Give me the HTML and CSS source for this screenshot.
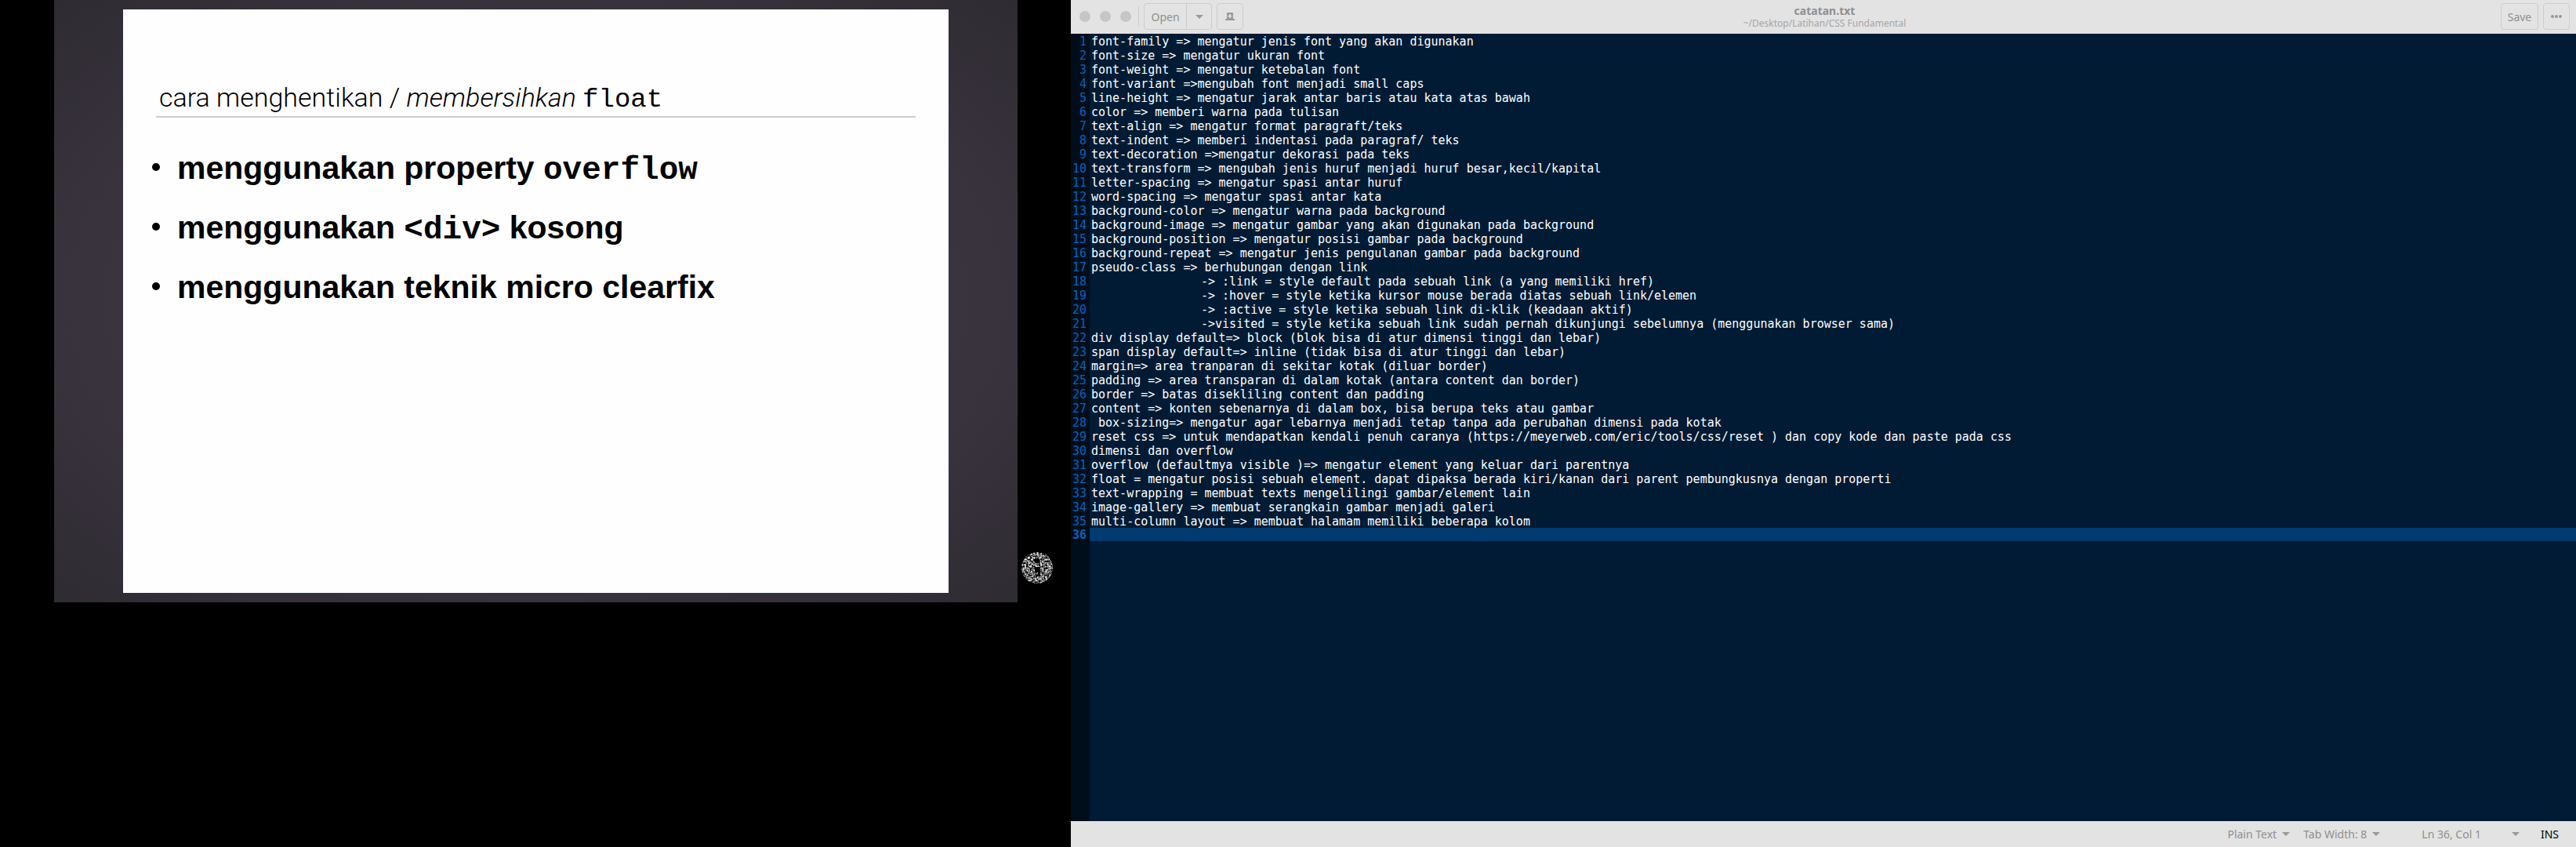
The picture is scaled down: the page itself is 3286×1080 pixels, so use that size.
FILE: index.html
```html
<!DOCTYPE html>
<html lang="id">
<head>
<meta charset="utf-8">
<title>catatan.txt</title>
<link rel="stylesheet" href="styles.css">
</head>
<body>
<main class="desktop">
  <section class="screen">
    <div class="stage">
      <article class="slide">
        <h1 class="slide-title">cara menghentikan / <em>membersihkan</em> <code>float</code></h1>
        <ul class="slide-list">
          <li>menggunakan property <code>overflow</code></li>
          <li>menggunakan <code>&lt;div&gt;</code> kosong</li>
          <li>menggunakan teknik micro clearfix</li>
        </ul>
      </article>
    </div>
    <svg class="watermark" viewBox="0 0 40 40" aria-hidden="true">
      <defs>
        <filter id="grain" x="0" y="0" width="1" height="1" color-interpolation-filters="sRGB">
          <feTurbulence type="fractalNoise" baseFrequency="0.45" numOctaves="2" seed="4"/>
          <feColorMatrix values="2.4 0 0 0 -0.78  2.4 0 0 0 -0.78  2.4 0 0 0 -0.78  0 0 0 0 1"/>
          <feComposite in2="SourceGraphic" operator="in"/>
        </filter>
      </defs>
      <circle cx="20" cy="20" r="20" fill="#777" filter="url(#grain)"/>
      <path d="M17 8h6v6h-6zM17 19h7v7q0 5-6 6v-2q3-1 3-4h-4z" fill="#000"/>
    </svg>
  </section>
  <section class="editor">
    <header class="toolbar">
      <div class="tools">
        <div class="lights"><i></i><i></i><i></i></div>
        <div class="split">
          <button type="button" class="btn open">Open</button>
          <button type="button" class="btn more" aria-label="Recent files"><i class="caret"></i></button>
        </div>
        <button type="button" class="btn square" aria-label="New document">
          <svg width="12" height="10" viewBox="0 0 12 10"><path fill-rule="evenodd" d="M2 1q0-1 1-1h6q1 0 1 1v7h2v2H0V8h2zM5 2v2H3v1h2v2h2V5h2V4H7V2z" fill="#999"/></svg>
        </button>
      </div>
      <div class="heading">
        <h2>catatan.txt</h2>
        <p>~/Desktop/Latihan/CSS Fundamental</p>
      </div>
      <div class="tools tools-end">
        <button type="button" class="btn save">Save</button>
        <button type="button" class="btn square" aria-label="Menu">
          <svg width="14" height="4" viewBox="0 0 14 4" fill="#999"><circle cx="2" cy="2" r="2"/><circle cx="7" cy="2" r="2"/><circle cx="12" cy="2" r="2"/></svg>
        </button>
      </div>
    </header>
    <ol class="code">
      <li>font-family =&gt; mengatur jenis font yang akan digunakan</li>
      <li>font-size =&gt; mengatur ukuran font</li>
      <li>font-weight =&gt; mengatur ketebalan font</li>
      <li>font-variant =&gt;mengubah font menjadi small caps</li>
      <li>line-height =&gt; mengatur jarak antar baris atau kata atas bawah</li>
      <li>color =&gt; memberi warna pada tulisan</li>
      <li>text-align =&gt; mengatur format paragraft/teks</li>
      <li>text-indent =&gt; memberi indentasi pada paragraf/ teks</li>
      <li>text-decoration =&gt;mengatur dekorasi pada teks</li>
      <li>text-transform =&gt; mengubah jenis huruf menjadi huruf besar,kecil/kapital</li>
      <li>letter-spacing =&gt; mengatur spasi antar huruf</li>
      <li>word-spacing =&gt; mengatur spasi antar kata</li>
      <li>background-color =&gt; mengatur warna pada background</li>
      <li>background-image =&gt; mengatur gambar yang akan digunakan pada background</li>
      <li>background-position =&gt; mengatur posisi gambar pada background</li>
      <li>background-repeat =&gt; mengatur jenis pengulanan gambar pada background</li>
      <li>pseudo-class =&gt; berhubungan dengan link</li>
      <li>		-&gt; :link = style default pada sebuah link (a yang memiliki href)</li>
      <li>		-&gt; :hover = style ketika kursor mouse berada diatas sebuah link/elemen</li>
      <li>		-&gt; :active = style ketika sebuah link di-klik (keadaan aktif)</li>
      <li>		-&gt;visited = style ketika sebuah link sudah pernah dikunjungi sebelumnya (menggunakan browser sama)</li>
      <li>div display default=&gt; block (blok bisa di atur dimensi tinggi dan lebar)</li>
      <li>span display default=&gt; inline (tidak bisa di atur tinggi dan lebar)</li>
      <li>margin=&gt; area tranparan di sekitar kotak (diluar border)</li>
      <li>padding =&gt; area transparan di dalam kotak (antara content dan border)</li>
      <li>border =&gt; batas disekliling content dan padding</li>
      <li>content =&gt; konten sebenarnya di dalam box, bisa berupa teks atau gambar</li>
      <li> box-sizing=&gt; mengatur agar lebarnya menjadi tetap tanpa ada perubahan dimensi pada kotak</li>
      <li>reset css =&gt; untuk mendapatkan kendali penuh caranya (https://meyerweb.com/eric/tools/css/reset ) dan copy kode dan paste pada css</li>
      <li>dimensi dan overflow</li>
      <li>overflow (defaultmya visible )=&gt; mengatur element yang keluar dari parentnya</li>
      <li>float = mengatur posisi sebuah element. dapat dipaksa berada kiri/kanan dari parent pembungkusnya dengan properti</li>
      <li>text-wrapping = membuat texts mengelilingi gambar/element lain</li>
      <li>image-gallery =&gt; membuat serangkain gambar menjadi galeri</li>
      <li>multi-column layout =&gt; membuat halamam memiliki beberapa kolom</li>
      <li class="current"></li>
    </ol>
    <footer class="status">
      <button type="button" class="pick">Plain Text<i class="caret"></i></button>
      <button type="button" class="pick">Tab Width: 8<i class="caret"></i></button>
      <button type="button" class="pick position">Ln 36, Col 1<i class="caret"></i></button>
      <span class="mode">INS</span>
    </footer>
  </section>
</main>
</body>
</html>
```
FILE: styles.css
```css
* { box-sizing: border-box; }
body { margin: 0; background: #000; font-family: "Noto Sans", sans-serif; font-size: 14px; }
h1, h2, p, ul, ol { margin: 0; padding: 0; }
button { font: inherit; color: inherit; background: none; border: 0; padding: 0; }

.desktop { display: grid; grid-template-columns: 1366fr 1920fr; min-height: 100vh; }

/* Presentation */
.screen { display: flex; align-items: flex-start; padding-left: 69px; }
.stage {
  flex: 1;
  padding: 12px 88px;
  background: radial-gradient(ellipse at center, #423d49 0%, #37323c 70%, #2f2b32 100%);
}
.slide { min-height: 744px; padding: 88px 42px; background: #fefefe; color: #000; }
.slide code { font-family: "Liberation Mono", monospace; line-height: 1; }
.slide-title {
  padding: 0 4px;
  border-bottom: 2px solid #ccc;
  font: 300 34px/48px Roboto, "Liberation Sans", sans-serif;
  white-space: nowrap;
}
.slide-list {
  margin-top: 26px;
  padding-left: 27px;
  font: bold 41px/76px "Liberation Sans", sans-serif;
  list-style: none;
  white-space: nowrap;
}
.slide-list li { height: 76px; }
.slide-list li::before {
  content: "";
  display: inline-block;
  width: 10px;
  height: 10px;
  margin: 0 22px 10px -32px;
  border-radius: 50%;
  background: #000;
}
.watermark { width: 40px; height: 40px; margin: 704px 23px 0 5px; }

/* Text editor */
.editor { display: flex; flex-direction: column; background: #001b33; }
.toolbar {
  display: grid;
  grid-template-columns: 1fr auto 1fr;
  align-items: center;
  height: 43px;
  padding: 0 8px 1px 11px;
  background: #e3e3e3;
  color: #8f8f8f;
}
.tools { display: flex; align-items: center; gap: 6px; }
.tools-end { justify-content: flex-end; }
.lights { display: flex; align-items: center; gap: 12px; height: 26px; padding-right: 9px; border-right: 1px solid #ccc; }
.lights i { width: 14px; height: 14px; border-radius: 50%; background: #c6c6c6; }
.split { display: flex; border: 1px solid #ccc; border-radius: 4px; }
.btn { height: 34px; border: 1px solid #ccc; border-radius: 4px; display: flex; align-items: center; justify-content: center; }
.split .btn { height: 32px; border: 0; border-radius: 0; }
.split .open { width: 53px; }
.split .more { width: 32px; border-left: 1px solid #ccc; }
.square { width: 34px; }
.save { width: 48px; }
.caret { border: 5px solid transparent; border-top-color: #999; border-bottom: 0; }
.heading { text-align: center; }
.heading h2 { font-size: 14px; line-height: 18px; }
.heading p { font-size: 12px; line-height: 14px; color: #a5a5a5; }

.code {
  flex: 1;
  counter-reset: line;
  background: linear-gradient(to right, #000e1b 24px, #001b33 24px);
  color: #fff;
  font: 15px/18px "DejaVu Sans Mono", monospace;
  list-style: none;
}
.code li { display: grid; grid-template-columns: 20px 1fr; column-gap: 6px; height: 18px; padding-top: 1px; counter-increment: line; white-space: pre; tab-size: 70px; }
.code li::before { content: counter(line); color: #0065bf; text-align: right; }
.code .current { height: 17px; padding-top: 0; background: linear-gradient(to right, #000e1b 24px, #003b70 24px); }
.code .current::before { font-weight: bold; }

.status {
  display: flex;
  align-items: center;
  justify-content: flex-end;
  gap: 17px;
  height: 33px;
  padding-right: 22px;
  background: #e3e3e3;
  color: #8f8f8f;
}
.pick { display: flex; align-items: center; gap: 7px; }
.position { margin-left: 36px; gap: 39px; }
.mode { margin-left: 10px; color: #000; }
```
